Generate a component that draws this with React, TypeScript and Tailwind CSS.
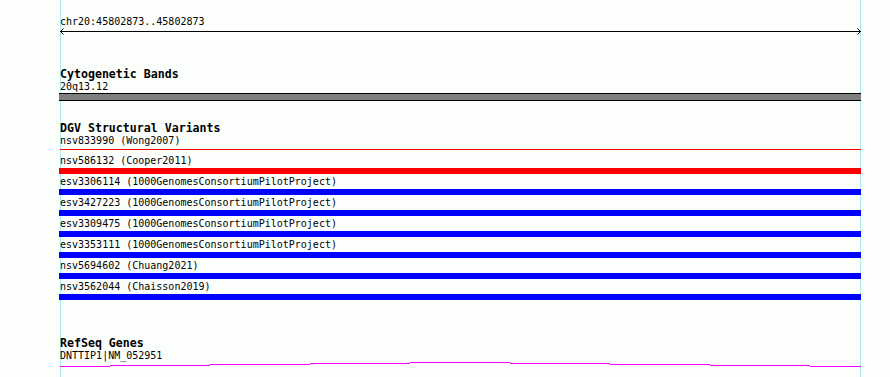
import React from "react";

const dgvRows: { label: string; color: string }[] = [
  { label: "nsv586132 (Cooper2011)", color: "bg-[#ff0000]" },
  { label: "esv3306114 (1000GenomesConsortiumPilotProject)", color: "bg-[#0000ff]" },
  { label: "esv3427223 (1000GenomesConsortiumPilotProject)", color: "bg-[#0000ff]" },
  { label: "esv3309475 (1000GenomesConsortiumPilotProject)", color: "bg-[#0000ff]" },
  { label: "esv3353111 (1000GenomesConsortiumPilotProject)", color: "bg-[#0000ff]" },
  { label: "nsv5694602 (Chuang2021)", color: "bg-[#0000ff]" },
  { label: "nsv3562044 (Chaisson2019)", color: "bg-[#0000ff]" },
];

const geneSegs: [number, number, number][] = [
  [0, 50, 4],
  [50, 100, 3],
  [150, 100, 2],
  [250, 100, 1],
  [350, 100, 0],
  [450, 100, 1],
  [550, 100, 2],
  [650, 100, 3],
  [750, 51, 4],
];

export default function App() {
  return (
    <div className="relative w-[890px] h-[377px] overflow-hidden bg-[#fcfefc] text-black font-['DejaVu_Sans_Mono',monospace]">
      <div className="absolute left-[60px] top-0 h-full w-px bg-[#a8eef0]" />
      <div className="absolute left-[860px] top-0 h-full w-px bg-[#a8eef0]" />

      <div className="relative ml-[60px] w-[800px] pt-[15px] flex flex-col">
        <div className="h-[13px] leading-[13px] text-[10px] whitespace-nowrap">chr20:45802873..45802873</div>
        <svg width="801" height="7" className="block">
          <line x1="0" y1="3.5" x2="801" y2="3.5" stroke="#000" strokeWidth="1" />
          <polyline points="3.5,0.5 0.5,3.5 3.5,6.5" fill="none" stroke="#000" strokeWidth="1" />
          <polyline points="797.5,0.5 800.5,3.5 797.5,6.5" fill="none" stroke="#000" strokeWidth="1" />
        </svg>

        <div className="mt-[33px] h-[12px] leading-[12px] text-[11.6px] font-bold whitespace-nowrap">Cytogenetic Bands</div>
        <div className="h-[13px] leading-[13px] text-[10px] whitespace-nowrap">20q13.12</div>
        <div className="-ml-px w-[802px] h-[8px] border-y border-black bg-[#808080]" />

        <div className="mt-[21px] h-[12px] leading-[12px] text-[11.6px] font-bold whitespace-nowrap">DGV Structural Variants</div>
        <div className="h-[13px] leading-[13px] text-[10px] whitespace-nowrap">nsv833990 (Wong2007)</div>
        <div className="mt-[2px] mb-[3px] w-[801px] h-px bg-[#ff0000]" />
        {dgvRows.map((r) => (
          <div key={r.label} className="flex flex-col">
            <div className="pt-px h-[15px] leading-[14px] text-[10px] whitespace-nowrap">{r.label}</div>
            <div className={`-ml-px w-[802px] h-[6px] ${r.color}`} />
          </div>
        ))}

        <div className="mt-[37px] h-[12px] leading-[12px] text-[11.6px] font-bold whitespace-nowrap">RefSeq Genes</div>
        <div className="h-[13px] leading-[13px] text-[10px] whitespace-nowrap">DNTTIP1|NM_052951</div>
        <svg width="801" height="6" className="block">
          {geneSegs.map(([x, w, y]) => (
            <rect key={x} x={x} y={y} width={w} height="1" fill="#ff00ff" />
          ))}
        </svg>
      </div>
    </div>
  );
}
